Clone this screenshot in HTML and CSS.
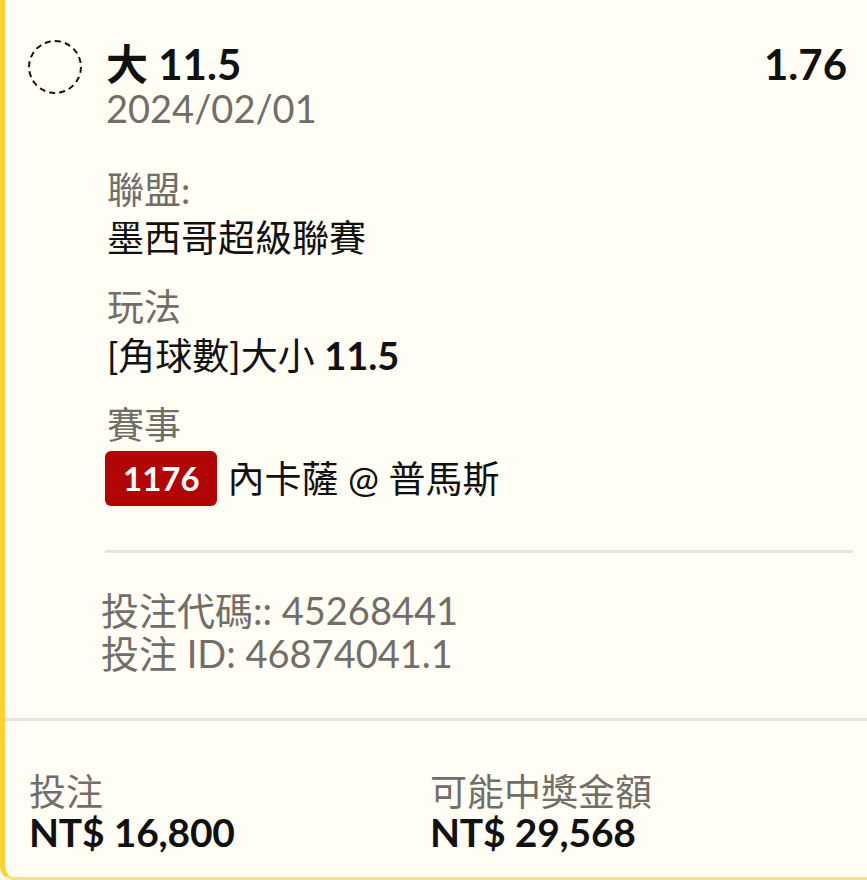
FILE: index.html
```html
<!DOCTYPE html>
<html lang="zh-Hant">
<head>
<meta charset="utf-8">
<title>投注</title>
<link rel="stylesheet" href="styles.css">
</head>
<body>
<div class="card">
  <div class="main">
    <div class="head">
      <div class="circle"></div>
      <div class="title-block">
        <div class="title">大 11.5</div>
        <div class="date">2024/02/01</div>
      </div>
      <div class="odds">1.76</div>
    </div>
    <div class="details">
      <div class="group">
        <div class="label">聯盟:</div>
        <div class="value">墨西哥超級聯賽</div>
      </div>
      <div class="group">
        <div class="label">玩法</div>
        <div class="value">[角球數]大小 <b>11.5</b></div>
      </div>
      <div class="group">
        <div class="label">賽事</div>
        <div class="match">
          <span class="badge">1176</span>
          <span class="teams">內卡薩 @ 普馬斯</span>
        </div>
      </div>
      <div class="divider"></div>
      <div class="ids">
        <div>投注代碼:: 45268441</div>
        <div>投注 ID: 46874041.1</div>
      </div>
    </div>
  </div>
  <div class="footer">
    <div class="col">
      <div class="flabel">投注</div>
      <div class="fvalue">NT$ 16,800</div>
    </div>
    <div class="col">
      <div class="flabel">可能中獎金額</div>
      <div class="fvalue">NT$ 29,568</div>
    </div>
  </div>
</div>
</body>
</html>
```

FILE: styles.css
```css
html, body {
  margin: 0;
  padding: 0;
  background: #fffdf4;
}
body {
  font-family: "Lato", "Noto Sans CJK TC", sans-serif;
  color: #111;
}
.card {
  box-sizing: border-box;
  width: 867px;
  height: 880px;
  background: #fffdf4;
  border-left: 5px solid #fbd234;
  border-bottom: 3px solid #f3e47e;
  border-bottom-left-radius: 14px;
  display: flex;
  flex-direction: column;
}
.main {
  padding: 42px 20px 0 23px;
}
.head {
  display: flex;
  align-items: flex-start;
}
.circle {
  box-sizing: border-box;
  width: 54px;
  height: 54px;
  border: 2px dashed #111;
  border-radius: 50%;
  margin-top: -2px;
  flex: none;
}
.title-block {
  margin-left: 24px;
  flex: 1;
}
.title {
  font-size: 42px;
  font-weight: 700;
  line-height: 44px;
}
.date {
  font-size: 38px;
  line-height: 44px;
  color: #716d67;
}
.odds {
  font-size: 42px;
  font-weight: 700;
  line-height: 44px;
}
.details {
  padding-left: 79px;
  margin-top: 36px;
}
.group {
  margin-bottom: 21px;
}
.label {
  font-size: 37px;
  line-height: 48px;
  color: #716d67;
}
.value {
  font-size: 37px;
  line-height: 48px;
}
.value b {
  font-weight: 700;
  font-size: 38px;
}
.match {
  display: flex;
  align-items: center;
  margin-top: 2px;
  margin-left: -2px;
}
.badge {
  box-sizing: border-box;
  height: 55px;
  padding: 0 17px 0 18px;
  background: #b20606;
  color: #fff;
  font-weight: 700;
  font-size: 33px;
  line-height: 55px;
  border-radius: 6px;
}
.teams {
  margin-left: 11px;
  font-size: 37px;
  line-height: 48px;
}
.divider {
  height: 3px;
  background: #e7e4dd;
  margin-top: 44px;
  margin-left: -2px;
  margin-right: -6px;
}
.ids {
  margin-top: 36px;
  margin-left: -6px;
  font-size: 38px;
  line-height: 43px;
  color: #716d67;
}
.footer {
  margin-top: 43px;
  border-top: 3px solid #e7e4dd;
  padding: 51px 36px 0 24px;
  display: grid;
  grid-template-columns: 1fr 1fr;
}
.flabel {
  font-size: 37px;
  line-height: 40px;
  color: #716d67;
}
.fvalue {
  font-size: 39px;
  font-weight: 700;
  line-height: 40px;
  letter-spacing: -0.2px;
}
```
